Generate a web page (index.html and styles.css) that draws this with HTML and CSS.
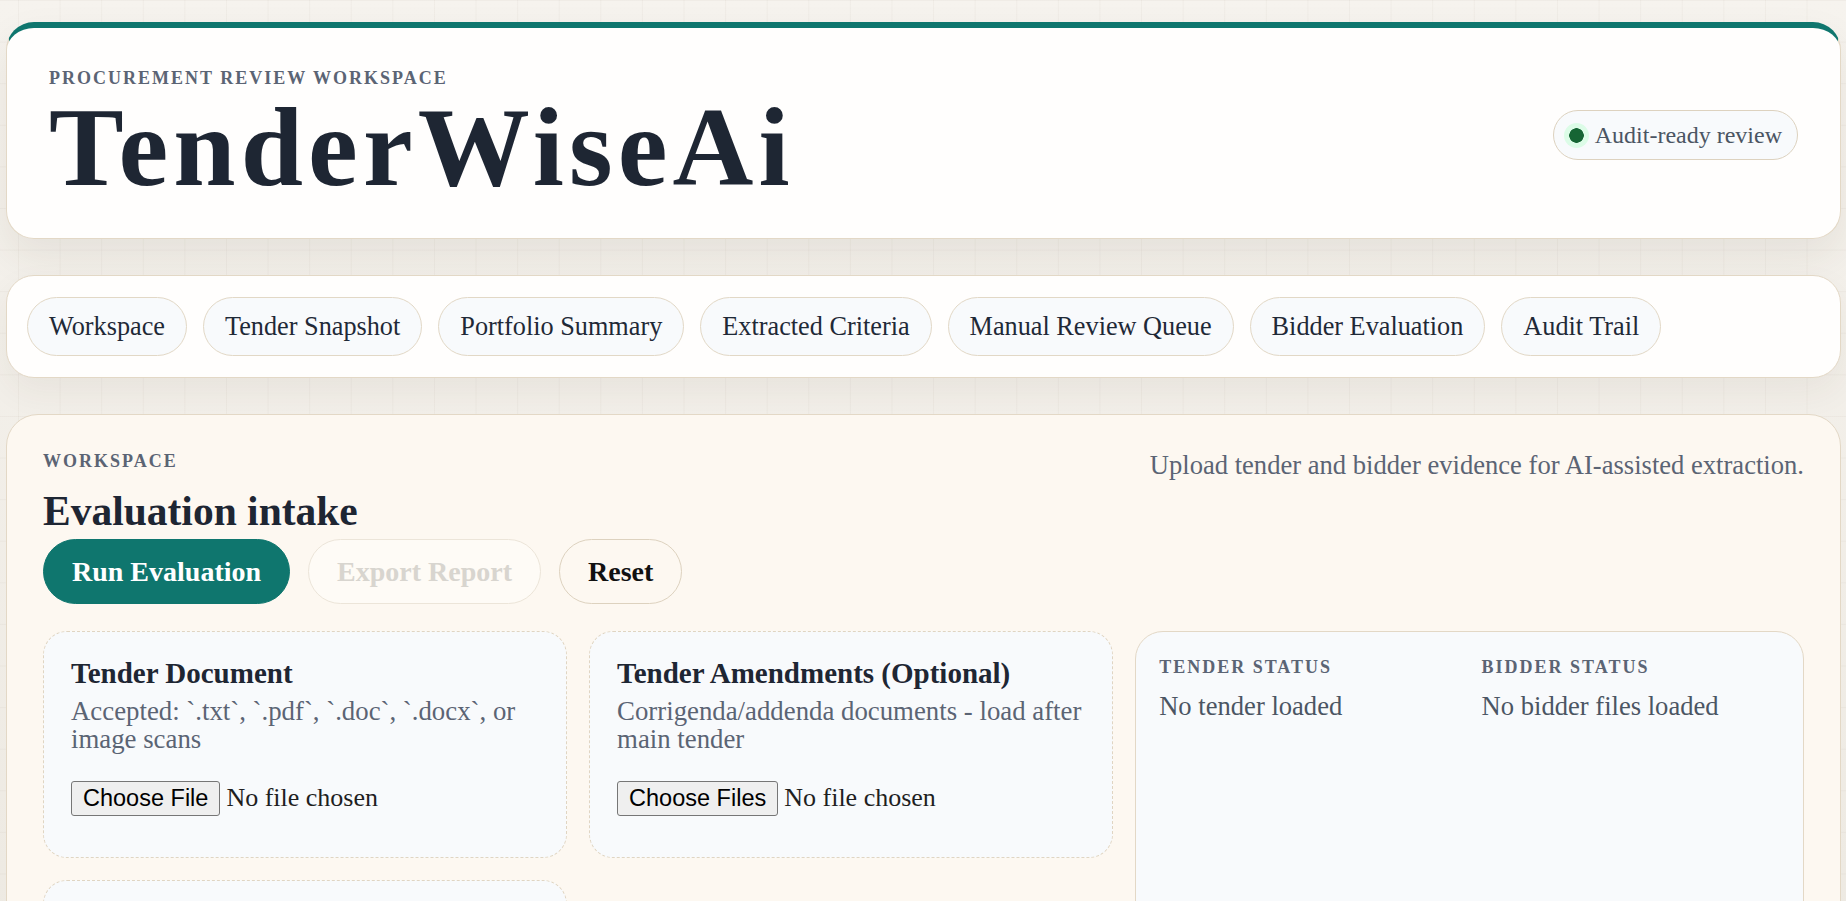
FILE: index.html
```html
<!DOCTYPE html>
<html lang="en">
<head>
  <meta charset="UTF-8" />
  <title>TenderWiseAi</title>
  <link rel="stylesheet" href="styles.css">
</head>
<body>
  <div class="app">
    <header class="hero">
      <div class="hero__text">
        <p class="eyebrow">Procurement Review Workspace</p>
        <h1 class="hero__title">TenderWiseAi</h1>
      </div>
      <div class="badge"><span class="badge__dot"></span>Audit-ready review</div>
    </header>

    <nav class="tabs">
      <a class="tab" href="#workspace">Workspace</a>
      <a class="tab" href="#snapshot">Tender Snapshot</a>
      <a class="tab" href="#portfolio">Portfolio Summary</a>
      <a class="tab" href="#criteria">Extracted Criteria</a>
      <a class="tab" href="#review">Manual Review Queue</a>
      <a class="tab" href="#bidders">Bidder Evaluation</a>
      <a class="tab" href="#audit">Audit Trail</a>
    </nav>

    <section class="panel" id="workspace">
      <div class="panel__head">
        <div>
          <p class="eyebrow">Workspace</p>
          <h2 class="panel__title">Evaluation intake</h2>
        </div>
        <p class="panel__lede">Upload tender and bidder evidence for AI-assisted extraction.</p>
      </div>

      <div class="actions">
        <button class="btn btn--primary" type="button">Run Evaluation</button>
        <button class="btn" type="button" disabled>Export Report</button>
        <button class="btn" type="button">Reset</button>
      </div>

      <div class="intake">
        <div class="uploads">
          <label class="drop">
            <span class="drop__title">Tender Document</span>
            <span class="drop__hint">Accepted: `.txt`, `.pdf`, `.doc`, `.docx`, or image scans</span>
            <input class="drop__input" type="file">
          </label>
          <label class="drop">
            <span class="drop__title">Tender Amendments (Optional)</span>
            <span class="drop__hint">Corrigenda/addenda documents - load after main tender</span>
            <input class="drop__input" type="file" multiple>
          </label>
          <label class="drop">
            <span class="drop__title">Bidder Submissions</span>
            <span class="drop__hint">Upload one or more bidder response files</span>
            <input class="drop__input" type="file" multiple>
          </label>
        </div>

        <aside class="status">
          <div>
            <p class="eyebrow">Tender Status</p>
            <p class="status__value">No tender loaded</p>
          </div>
          <div>
            <p class="eyebrow">Bidder Status</p>
            <p class="status__value">No bidder files loaded</p>
          </div>
        </aside>
      </div>
    </section>
  </div>
</body>
</html>
```

FILE: styles.css
```css
body {
  margin: 0;
  min-height: 100vh;
  font-family: "Liberation Serif", "Times New Roman", serif;
  color: #1f2937;
  background-color: #f1ede6;
  background-image:
    linear-gradient(rgba(90, 70, 40, 0.04) 1px, transparent 1px),
    linear-gradient(90deg, rgba(90, 70, 40, 0.04) 1px, transparent 1px),
    linear-gradient(180deg, #f6f3ee, #ebe7df);
  background-size: 41.6px 41.6px, 41.6px 41.6px, 100% 100%;
  background-position: 18px 0, 18px 0, 0 0;
}

.app {
  display: flex;
  flex-direction: column;
  gap: 36px;
  padding: 22px 5px 40px 6px;
}

.eyebrow {
  margin: 0;
  font-size: 18px;
  font-weight: 700;
  line-height: 1.2;
  letter-spacing: 2px;
  text-transform: uppercase;
  color: #5b6474;
}

/* header card */
.hero {
  display: flex;
  align-items: center;
  justify-content: space-between;
  padding: 40px 42px 35px;
  background: #fffefd;
  border: 1px solid #e3d8c6;
  border-top: 6px solid #0f766e;
  border-radius: 28px;
  box-shadow: 0 18px 40px rgba(70, 55, 30, 0.08);
}

.hero__title {
  margin: 1px 0 0;
  font-size: 112px;
  font-weight: 700;
  line-height: 1;
  letter-spacing: 5.1px;
  color: #1e2633;
}

.badge {
  display: flex;
  align-items: center;
  gap: 6px;
  height: 50px;
  box-sizing: border-box;
  padding: 0 15px 0 10px;
  background: #f8fafc;
  border: 1px solid #ddd2bf;
  border-radius: 999px;
  font-size: 24px;
  color: #4b5563;
}

.badge__dot {
  width: 25px;
  height: 25px;
  border-radius: 50%;
  background: radial-gradient(circle, #166534 0 7px, #dcfce7 7.5px);
}

/* section tabs */
.tabs {
  display: flex;
  gap: 16px;
  padding: 21px 20px;
  background: #fffefd;
  border: 1px solid #e3d8c6;
  border-radius: 28px;
  box-shadow: 0 14px 34px rgba(70, 55, 30, 0.06);
}

.tab {
  padding: 13px 21px;
  font-size: 26.25px;
  line-height: 31px;
  color: #1f2937;
  text-decoration: none;
  background: #f8fafc;
  border: 1px solid #e2d8c6;
  border-radius: 999px;
}

/* workspace panel */
.panel {
  padding: 36px 36px 40px;
  background: #fdf8f1;
  border: 1px solid #e3d8c6;
  border-radius: 32px;
}

.panel__head {
  display: flex;
  align-items: flex-start;
  justify-content: space-between;
  gap: 24px;
}

.panel__title {
  margin: 15px 0 0;
  font-size: 41.5px;
  font-weight: 700;
  line-height: 1.2;
  color: #1e2633;
}

.panel__lede {
  margin: -1px 0 0;
  font-size: 26.6px;
  line-height: 1.2;
  color: #5b6474;
}

.actions {
  display: flex;
  gap: 18px;
  margin-top: 2px;
}

.btn {
  padding: 15px 28px;
  font-family: "Liberation Serif", serif;
  font-size: 28px;
  font-weight: 700;
  line-height: 33px;
  color: #111;
  background: transparent;
  border: 1px solid #ddd2bf;
  border-radius: 999px;
  cursor: pointer;
}

.btn--primary {
  color: #fff;
  background: #0f766e;
  border-color: #0f766e;
}

.btn:disabled {
  color: #d8d5cf;
  background: #fefbf6;
  border-color: #ece5d9;
  cursor: default;
}

.intake {
  display: grid;
  grid-template-columns: 1.6fr 1fr;
  gap: 22px;
  margin-top: 27px;
}

.uploads {
  display: grid;
  grid-template-columns: 1fr 1fr;
  gap: 22px;
  align-content: start;
}

.drop {
  display: block;
  min-height: 227px;
  box-sizing: border-box;
  padding: 24px 27px;
  background: #f8fafc;
  border: 1px dashed #e0d5c2;
  border-radius: 24px;
}

.drop__title {
  display: block;
  font-size: 29px;
  font-weight: 700;
  line-height: 1.2;
  color: #1e2633;
}

.drop__hint {
  display: block;
  margin-top: 6px;
  font-size: 26.8px;
  line-height: 28px;
  color: #5b6474;
}

.drop__input {
  display: block;
  margin-top: 28px;
  font-family: "Liberation Serif", serif;
  font-size: 26px;
  color: #1f1f1f;
}

.drop__input::file-selector-button {
  margin-right: 6px;
  padding: 3px 11px;
  font-family: "Liberation Sans", Arial, sans-serif;
  font-size: 23.5px;
  color: #000;
  background: #efefef;
  border: 1px solid #767676;
  border-radius: 3px;
}

/* status card */
.status {
  display: grid;
  grid-template-columns: 1fr 1fr;
  gap: 24px;
  align-content: start;
  padding: 25px 23px 23px;
  background: #f8fafc;
  border: 1px solid #e3d8c6;
  border-radius: 28px;
}

.status__value {
  margin: 12px 0 0;
  font-size: 26.6px;
  line-height: 1.2;
  color: #4b5563;
}
```
